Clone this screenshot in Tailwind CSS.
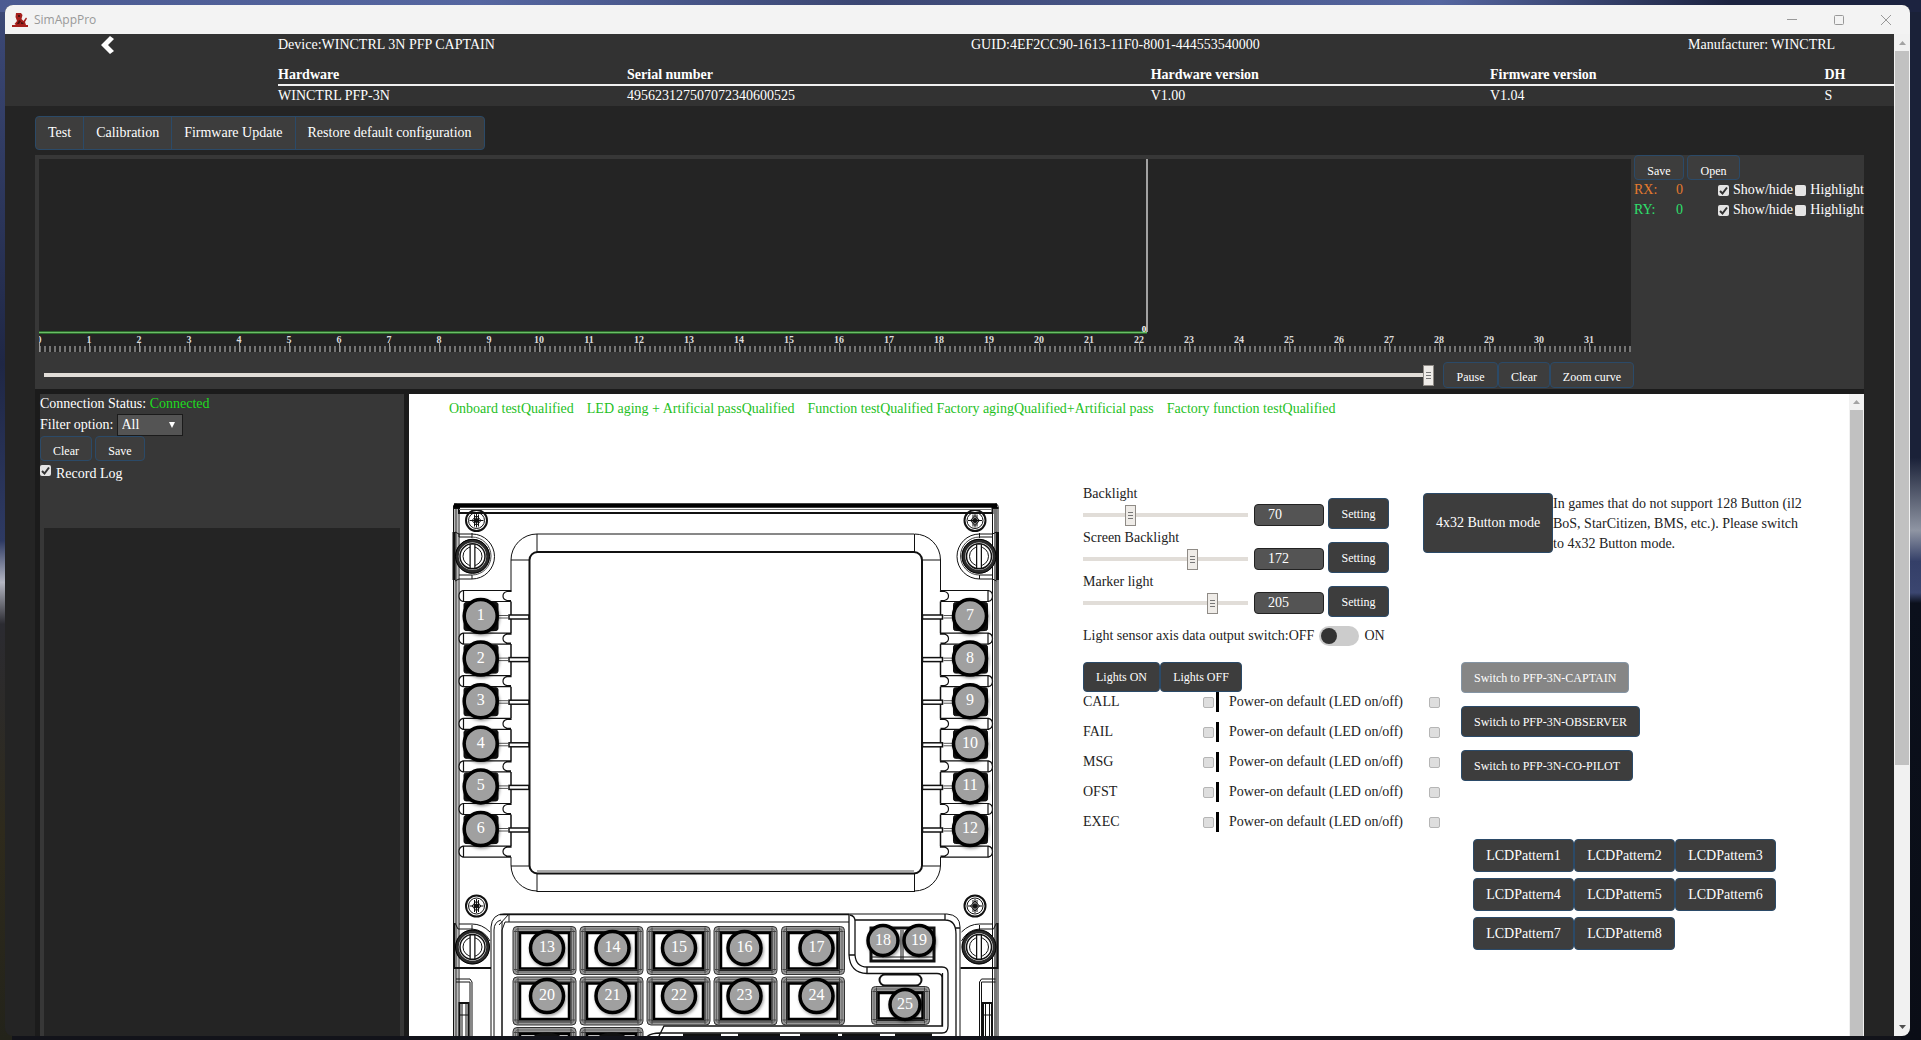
<!DOCTYPE html>
<html lang="en">
<head>
    <meta charset="UTF-8">
    <meta name="viewport" content="width=device-width, initial-scale=1.0">
    <title>SimAppPro</title>
    <script src="https://cdn.jsdelivr.net/npm/@tailwindcss/browser@4"></script>
    <style>
        /* desktop wallpaper round the window */
        body {
            background:
                linear-gradient(90deg, #4b5a91, #5566a0 25%, #3b4672 45%, #5566a0 75%, #1c2340 90%) top / 100% 12px no-repeat,
                linear-gradient(#3d4a78, #1f2745 35%, #2e3a63 52%, #b4b6c2 56%, #2b2b31 60%, #2e2a1c 80%, #23231a) left / 12px 100% no-repeat,
                linear-gradient(#1a2138, #1a2138 44%, #8f95a3 51%, #343f68 54%, #3b4670 57%, #0b101c 58%, #0a0d16) right / 20px 100% no-repeat,
                #12131a;
        }
        .range { appearance: none; background: transparent; height: 21px; }
        .range::-webkit-slider-runnable-track { height: 4px; background: #e1ddd8; }
        .range::-webkit-slider-thumb {
            appearance: none; width: 11px; height: 21px; margin-top: -8px;
            border: 1px solid #8f8b86;
            background: linear-gradient(#777, #777) center 6px / 5px 1px no-repeat,
                        linear-gradient(#777, #777) center 9px / 5px 1px no-repeat,
                        linear-gradient(#777, #777) center 12px / 5px 1px no-repeat, #efece8;
        }
    </style>
</head>
<body class="h-screen overflow-hidden pt-[5px] pr-[11px] pb-[4px] pl-[5px] font-['Liberation_Serif',serif] text-[14px] leading-5 text-white">
    <div class="flex h-full flex-col overflow-hidden rounded-lg bg-[#242424]">

        <!-- title bar -->
        <div class="flex h-[29px] shrink-0 items-center justify-between bg-[#f3f3f3] pr-[19px] pl-[7px]">
            <div class="flex items-center gap-[6px]">
                <svg class="size-4" viewBox="0 0 16 16" fill="#a5201d">
                    <path d="M4 1h5l1.500 2-1 4 2 2 2.500-3.500 1 1L13 10l1 3H4L2.500 12 5 9 3.500 5z"/>
                    <path d="M0 13h16v2H0z"/>
                    <path d="M6 3h2v2H6zM7 8l2 1-2 3H5zM9 10l3 1-1 1H9z" fill="#4d1212"/>
                </svg>
                <span class="font-['Open_Sans',sans-serif] text-xs text-[#999]">SimAppPro</span>
            </div>
            <div class="flex gap-[37px] text-[#999]">
                <button aria-label="Minimize"><svg class="size-[10px]" viewBox="0 0 10 10" stroke="currentColor"><path d="M0 4.500h10"/></svg></button>
                <button aria-label="Maximize"><svg class="size-[10px]" viewBox="0 0 10 10" fill="none" stroke="currentColor"><rect x=".5" y=".5" width="9" height="9" rx="1"/></svg></button>
                <button aria-label="Close"><svg class="size-[10px]" viewBox="0 0 10 10" stroke="currentColor"><path d="M0 0l10 10M10 0L0 10"/></svg></button>
            </div>
        </div>

        <div class="flex min-h-0 flex-1">
            <div class="flex min-w-0 flex-1 flex-col">

                <!-- device header -->
                <header class="flex h-[72px] shrink-0 bg-[#323232]">
                    <div class="w-[273px] shrink-0 pt-[2px] pl-24">
                        <button aria-label="Back" class="block"><svg class="h-[18px] w-[13px]" viewBox="0 0 13 18" fill="#fff"><path d="M9 0l4 3-6 6 6 6-4 3L0 9z"/></svg></button>
                    </div>
                    <div class="flex-1">
                        <div class="grid grid-cols-[693fr_717fr_206fr] pt-px">
                            <div>Device:WINCTRL 3N PFP CAPTAIN</div>
                            <div>GUID:4EF2CC90-1613-11F0-8001-444553540000</div>
                            <div>Manufacturer: WINCTRL</div>
                        </div>
                        <table class="mt-[9px] w-full table-fixed text-left">
                            <colgroup><col class="w-[21.6%]"><col class="w-[32.4%]"><col class="w-[21%]"><col class="w-[20.7%]"><col></colgroup>
                            <thead>
                                <tr class="h-[21px] border-b-2 border-[#f0f0f0] leading-[19px]">
                                    <th>Hardware</th><th>Serial number</th><th>Hardware version</th><th>Firmware version</th><th>DH</th>
                                </tr>
                            </thead>
                            <tbody>
                                <tr class="leading-5">
                                    <td>WINCTRL PFP-3N</td><td>495623127507072340600525</td><td>V1.00</td><td>V1.04</td><td>S</td>
                                </tr>
                            </tbody>
                        </table>
                    </div>
                </header>

                <main class="flex min-h-0 flex-1 flex-col pt-[10px] pr-[30px] pl-[30px]">
                    <nav class="mb-[5px] flex h-[34px] shrink-0 self-start divide-x divide-[#2b4a68] rounded border border-[#2b4a68] bg-[#3d3d3d]">
                        <button class="px-3">Test</button>
                        <button class="px-3">Calibration</button>
                        <button class="px-3">Firmware Update</button>
                        <button class="px-3">Restore default configuration</button>
                    </nav>

                    <!-- axis curve -->
                    <section class="flex h-[234px] shrink-0 bg-[#373737]">
                        <div class="flex min-w-0 flex-1 flex-col pt-1 pl-1">
                            <svg id="chart" class="mr-[3px] h-[193px] w-auto bg-[#242424]">
                                <defs>
                                    <pattern id="minor" width="5" height="6" patternUnits="userSpaceOnUse"><rect width="2" height="6" fill="#747474"/></pattern>
                                </defs>
                                <rect y="187" width="100%" height="6" fill="url(#minor)"/>
                                <path d="M0 173.500H1108" stroke="#2d6b2c" stroke-width="3"/>
                                <path d="M0 173.500H1108" stroke="#6bbd68"/>
                                <path d="M1108 0V173" stroke="#ccc" stroke-width="1.500"/>
                            </svg>
                            <div class="flex h-[37px] items-center pt-2 pl-[5px]">
                                <input type="range" aria-label="Timeline" value="100" class="range min-w-0 flex-1">
                                <div class="ml-[9px] flex text-xs">
                                    <button class="h-[26px] w-[55px] rounded border border-[#2b4a68] bg-[#3d3d3d] pt-1">Pause</button>
                                    <button class="h-[26px] w-[52px] rounded border border-[#2b4a68] bg-[#3d3d3d] pt-1">Clear</button>
                                    <button class="h-[26px] w-[84px] rounded border border-[#2b4a68] bg-[#3d3d3d] pt-1">Zoom curve</button>
                                </div>
                            </div>
                        </div>
                        <div class="w-[230px] shrink-0">
                            <div class="flex gap-[3px] text-xs">
                                <button class="h-[25px] w-[50px] rounded border border-[#2b4a68] bg-[#3d3d3d] pt-[6px]">Save</button>
                                <button class="h-[25px] w-[53px] rounded border border-[#2b4a68] bg-[#3d3d3d] pt-[6px]">Open</button>
                            </div>
                            <div class="flex items-center">
                                <span class="w-[42px] text-[#e67a2e]">RX:</span><span class="w-[42px] text-[#e67a2e]">0</span>
                                <label class="flex items-center gap-1"><input type="checkbox" checked class="tick size-[11px] appearance-none rounded-xs bg-[#e4e4e4]">Show/hide</label>
                                <label class="ml-auto flex items-center gap-1"><input type="checkbox" class="tick size-[11px] appearance-none rounded-xs bg-[#e4e4e4]">Highlight</label>
                            </div>
                            <div class="flex items-center">
                                <span class="w-[42px] text-[#2ee06c]">RY:</span><span class="w-[42px] text-[#2ee06c]">0</span>
                                <label class="flex items-center gap-1"><input type="checkbox" checked class="tick size-[11px] appearance-none rounded-xs bg-[#e4e4e4]">Show/hide</label>
                                <label class="ml-auto flex items-center gap-1"><input type="checkbox" class="tick size-[11px] appearance-none rounded-xs bg-[#e4e4e4]">Highlight</label>
                            </div>
                        </div>
                    </section>

                    <section class="flex min-h-0 flex-1 gap-[5px] bg-[#1b1b1b] pt-[5px] pl-[5px]">
                        <!-- log -->
                        <div class="flex w-[364px] shrink-0 flex-col bg-[#373737]">
                            <div>Connection Status: <span class="text-[#1fdc1f]">Connected</span></div>
                            <div class="flex items-center">
                                <label for="filter" class="mr-[3px]">Filter option:</label>
                                <span class="relative flex">
                                    <select id="filter" class="h-[22px] w-[66px] appearance-none border border-[#1b1b1b] bg-[#545454] pl-1"><option>All</option></select>
                                    <svg class="pointer-events-none absolute top-2 right-2 size-[6px]" viewBox="0 0 6 6" fill="#fff"><path d="M0 0h6L3 6z"/></svg>
                                </span>
                            </div>
                            <div class="flex gap-[3px] text-xs">
                                <button class="h-[25px] w-[52px] rounded border border-[#2b4a68] bg-[#3d3d3d] pt-1">Clear</button>
                                <button class="h-[25px] w-[50px] rounded border border-[#2b4a68] bg-[#3d3d3d] pt-1">Save</button>
                            </div>
                            <label class="mt-[3px] flex items-start gap-[5px]"><input type="checkbox" checked class="tick mt-px size-[11px] appearance-none rounded-xs bg-[#e4e4e4]">Record Log</label>
                            <div class="mx-1 mt-11 flex-1 bg-[#242424]"></div>
                        </div>

                        <!-- device test panel -->
                        <div class="flex min-w-0 flex-1 bg-white text-[#222]">
                            <div class="min-w-0 flex-1 overflow-hidden pl-10">
                                <div class="flex gap-[13px] pt-[5px] text-[#1fbf1f]">
                                    <span>Onboard testQualified</span>
                                    <span>LED aging + Artificial passQualified</span>
                                    <span>Function testQualified Factory agingQualified+Artificial pass</span>
                                    <span>Factory function testQualified</span>
                                </div>
                                <div class="flex items-start gap-20 pt-[66px]">
                                    <svg id="device" class="h-[552px] w-[554px] shrink-0" viewBox="449 485 554 552" fill="none" stroke="#111"></svg>

                                    <div class="shrink-0">
                                        <div class="flex items-start">
                                            <div class="w-[306px]">
                                                <div class="flex h-[44px] items-end">
                                                    <div class="mb-1 w-[165px]"><label for="back" class="block">Backlight</label><input id="back" type="range" max="255" value="70" class="range block w-full"></div>
                                                    <input type="text" aria-label="Backlight value" value="70" class="mb-[3px] ml-[6px] h-[22px] w-[70px] rounded border border-[#222] bg-[#545454] pl-[13px] text-white">
                                                    <button class="ml-1 h-[31px] w-[61px] rounded border border-[#2b4a68] bg-[#3d3d3d] text-xs text-white">Setting</button>
                                                </div>
                                                <div class="flex h-[44px] items-end">
                                                    <div class="mb-1 w-[165px]"><label for="screen" class="block">Screen Backlight</label><input id="screen" type="range" max="255" value="172" class="range block w-full"></div>
                                                    <input type="text" aria-label="Screen backlight value" value="172" class="mb-[3px] ml-[6px] h-[22px] w-[70px] rounded border border-[#222] bg-[#545454] pl-[13px] text-white">
                                                    <button class="ml-1 h-[31px] w-[61px] rounded border border-[#2b4a68] bg-[#3d3d3d] text-xs text-white">Setting</button>
                                                </div>
                                                <div class="flex h-[44px] items-end">
                                                    <div class="mb-1 w-[165px]"><label for="marker" class="block">Marker light</label><input id="marker" type="range" max="255" value="205" class="range block w-full"></div>
                                                    <input type="text" aria-label="Marker light value" value="205" class="mb-[3px] ml-[6px] h-[22px] w-[70px] rounded border border-[#222] bg-[#545454] pl-[13px] text-white">
                                                    <button class="ml-1 h-[31px] w-[61px] rounded border border-[#2b4a68] bg-[#3d3d3d] text-xs text-white">Setting</button>
                                                </div>
                                                <div class="mt-[9px] flex items-center">
                                                    <label for="sensor">Light sensor axis data output switch:OFF</label>
                                                    <input id="sensor" type="checkbox" role="switch" class="mx-[5px] h-5 w-10 appearance-none rounded-full bg-[#ccc] p-[2px] before:block before:size-4 before:rounded-full before:bg-[#333]">
                                                    <span>ON</span>
                                                </div>
                                            </div>
                                            <button class="mt-2 ml-[34px] h-[60px] w-[130px] shrink-0 rounded border border-[#2b4a68] bg-[#3d3d3d] text-white">4x32 Button mode</button>
                                            <p class="mt-[9px] w-[250px]">In games that do not support 128 Button (il2 BoS, StarCitizen, BMS, etc.). Please switch to 4x32 Button mode.</p>
                                        </div>

                                        <div class="mt-4 flex items-start">
                                            <div class="w-[357px]">
                                                <div class="flex text-xs text-white">
                                                    <button class="h-[30px] w-[77px] rounded border border-[#2b4a68] bg-[#3d3d3d]">Lights ON</button>
                                                    <button class="h-[30px] w-[82px] rounded border border-[#2b4a68] bg-[#3d3d3d]">Lights OFF</button>
                                                </div>
                                                <div id="leds" class="flex flex-col gap-[10px]"></div>
                                            </div>
                                            <div class="ml-[21px]">
                                                <div class="flex flex-col items-start gap-[13px] text-xs text-white">
                                                    <button disabled class="h-[31px] rounded border border-[#8494a4] bg-[#868686] px-3">Switch to PFP-3N-CAPTAIN</button>
                                                    <button class="h-[31px] rounded border border-[#2b4a68] bg-[#3d3d3d] px-3">Switch to PFP-3N-OBSERVER</button>
                                                    <button class="h-[31px] rounded border border-[#2b4a68] bg-[#3d3d3d] px-3">Switch to PFP-3N-CO-PILOT</button>
                                                </div>
                                                <div id="patterns" class="mt-[58px] ml-3 grid w-[303px] grid-cols-3 gap-y-[6px] text-white"></div>
                                            </div>
                                        </div>
                                    </div>
                                </div>
                            </div>
                            <div class="flex w-[15px] shrink-0 flex-col bg-[#f1f1f1]">
                                <svg class="mx-auto my-[5px] h-[6px] w-[7px] shrink-0" viewBox="0 0 7 6" fill="#a3a3a3"><path d="M0 5h7L3.500 1z"/></svg>
                                <div class="mx-px flex-1 bg-[#c1c1c1]"></div>
                            </div>
                        </div>
                    </section>
                </main>
            </div>

            <!-- page scrollbar -->
            <div class="flex w-4 shrink-0 flex-col items-center bg-[#f1f1f1]">
                <svg class="my-[5px] h-[7px] w-[7px] shrink-0" viewBox="0 0 7 7" fill="#a3a3a3"><path d="M0 6h7L3.500 2z"/></svg>
                <div class="w-[14px] flex-[714] bg-[#c1c1c1]"></div>
                <div class="flex-[254]"></div>
                <svg class="my-[5px] h-[7px] w-[7px] shrink-0" viewBox="0 0 7 7" fill="#505050"><path d="M0 1h7L3.500 5z"/></svg>
            </div>
        </div>
    </div>

    <script>
        // tick marks inside the checked boxes
        document.querySelectorAll('.tick:checked').forEach(box => {
            const wrap = document.createElement('span');
            wrap.className = 'relative flex';
            box.replaceWith(wrap);
            wrap.append(box);
            wrap.insertAdjacentHTML('beforeend', '<svg class="pointer-events-none absolute bottom-0 left-0 size-[11px]" viewBox="0 0 11 11" fill="none" stroke="#333" stroke-width="2"><path d="M2 6l2.500 2.500L9 2.500"/></svg>');
        });

        // time ruler, one unit every 50px
        let ruler = '';
        for (let i = 0; i <= 31; i++) {
            ruler += `<path d="M${i * 50 + .5} 184v9" stroke="#999"/>
                <text x="${i * 50}" y="184" text-anchor="middle" font-size="10" font-weight="bold" fill="#ddd">${i}</text>`;
        }
        ruler += '<text x="1105" y="173" text-anchor="middle" font-size="9" font-weight="bold" fill="#fff">0</text>';
        document.getElementById('chart').insertAdjacentHTML('beforeend', ruler);

        document.getElementById('leds').innerHTML = ['CALL', 'FAIL', 'MSG', 'OFST', 'EXEC'].map(name => `
            <div class="flex h-5 items-center">
                <label for="led-${name}" class="w-[120px]">${name}</label>
                <input id="led-${name}" type="checkbox" class="size-[11px] appearance-none rounded-xs border border-[#b5b5b5] bg-[#dedede]">
                <span class="ml-[2px] h-5 w-[3px] bg-black"></span>
                <label for="on-${name}" class="ml-[10px] w-[200px]">Power-on default (LED on/off)</label>
                <input id="on-${name}" type="checkbox" class="size-[11px] appearance-none rounded-xs border border-[#b5b5b5] bg-[#dedede]">
            </div>`).join('');

        document.getElementById('patterns').innerHTML = [1, 2, 3, 4, 5, 6, 7, 8].map(n =>
            `<button class="h-[33px] rounded border border-[#2b4a68] bg-[#3d3d3d]">LCDPattern${n}</button>`).join('');

        // half of the panel outline, mirrored for the right side
        const side = () => {
            let s = `
                <path d="M453.500 1040V506q0-2 3-2M459 1040V508"/><path d="M456 1040V509" stroke="#777" stroke-width="3"/>
                <path d="M453 508h6v6" stroke-width="2"/>
                <path d="M454 532v48" stroke-width="3"/>
                <path d="M455 532l4 2v3h13M459 534h13a22.500 22.500 0 0 1 0 45h-13l-4 2M459 575h13v4M472 533v5"/>
                <path d="M472 537a19 19 0 0 1 0 38" stroke="#444"/>
                <path d="M511 591v-31a26 26 0 0 1 26-26M511 560h18M537 534v18"/>
                <path d="M511 857v8a26 26 0 0 0 26 26M511 866h18M537 874v18"/>
                <path d="M455 923l3 6h14a22 22 0 0 1 18 12M472 925v6M459 924h13q10 0 18 8"/>
                <path d="M454 923v45h37" stroke-width="2"/>
                <path d="M456 979h14l2 3v58M456 982h14v58M459 1015h10M462 1003v37M466 1003v37"/>
                <path d="M459.500 1040v-37h9v37" stroke-width="2"/>`;
            for (let i = 0; i < 7; i++) {
                const y = 590.5 + i * 42.6;
                s += `<path d="M511 ${y}h-48q-4 1-4 5.500t4 5.500h48M463.500 ${y}v11M511 ${y}v1h-4q-4 1-4 4.500t4 4.500h4" stroke-width="1.200" fill="#fff"/>`;
                if (i < 6) s += `<path d="M511 ${y + 11}v31.600" stroke-width="1.500"/>
                    <rect x="464" y="${y + 12}" width="34" height="28" rx="2" fill="#111"/>
                    <path d="M498 ${y + 25}h10M498 ${y + 27.5}h10" stroke="#555"/>
                    <rect x="509" y="${y + 24.5}" width="20" height="4" stroke-width="1.500" fill="#fff"/>`;
            }
            for (const y of [520.5, 906]) {
                s += `<circle cx="476.500" cy="${y}" r="10.500" stroke-width="2"/><circle cx="476.500" cy="${y}" r="8"/>
                    <path d="M476.500 ${y - 7}v14M469.500 ${y}h14M472 ${y}l4.500-5 4.500 5-4.500 5zM474.500 ${y - 6}v12M478.500 ${y - 6}v12"/><circle cx="476.500" cy="${y}" r="2" fill="#111"/>`;
            }
            for (const y of [556.3, 947]) {
                s += `<circle cx="472.500" cy="${y}" r="15.500" stroke-width="3.500" stroke="#2a2a2a" fill="#fff"/><circle cx="472.500" cy="${y}" r="12.500" stroke-width="1.500"/>
                    <circle cx="472.500" cy="${y}" r="9.500"/><circle cx="472.500" cy="${y}" r="17" stroke="#000"/>
                    <path d="M472.500 ${y - 12}v24" stroke-width="6"/><path d="M472.500 ${y - 11.5}v23" stroke="#fff" stroke-width="3.500"/>`;
            }
            return s;
        };

        const key = (x, y, w = 63, h = 48) => `
            <rect x="${x}" y="${y}" width="${w}" height="${h}" rx="4" fill="#999" stroke="#333"/>
            <rect x="${x + 2.5}" y="${y + 2.5}" width="${w - 5}" height="${h - 5}" rx="2" stroke="#666"/>
            <rect x="${x + 5}" y="${y + 5}" width="${w - 10}" height="${h - 9}" stroke="#222"/>
            <path d="M${x + 1} ${y + 5}h4v-4M${x + w - 1} ${y + 5}h-4v-4M${x + 1} ${y + h - 5}h4v4M${x + w - 1} ${y + h - 5}h-4v4" stroke="#444"/>
            <rect x="${x + 7}" y="${y + 6.5}" width="${w - 14}" height="${h - 12.5}" stroke-width="2.500" stroke="#000" fill="#fff"/>`;

        const dot = (n, x, y, r = 16.5) => `
            <circle cx="${x}" cy="${y}" r="${r}" fill="#a0a0a0" stroke="#000" stroke-width="3.500" filter="url(#soft)"/>
            <text x="${x}" y="${y + 4}" text-anchor="middle" font-size="16" fill="#fff" stroke="none">${n}</text>`;

        const keyX = [513, 580, 647, 714, 781.5];
        const dotX = [547, 612.5, 679, 744.5, 816.5];
        const half = side();
        let svg = `
            <defs><filter id="soft" x="-30%" y="-30%" width="160%" height="160%"><feDropShadow dx="1" dy="1.500" stdDeviation="1.500" flood-opacity=".4"/></filter></defs>
            <g>${half}</g><g transform="translate(1451.500 0) scale(-1 1)">${half}</g>
            <path d="M454 505.500h543" stroke-width="4.500" stroke="#000"/><path d="M459 509.500h533" stroke="#777"/><path d="M459 513h533" stroke-width="2"/>
            <path d="M537 534h377M537 891.500h377"/>
            <rect x="529.500" y="552" width="392.500" height="321.500" rx="8" stroke-width="2" fill="#fff"/>
            <path d="M537 871h377" stroke="#555"/>
            <path d="M491 1040V927q1-13 13-13h443q13 1 13 13v113M494 1040V930q0-8 7-10M502 1040V930l3-8h344M499 925l10-11v8M502 1040V921"/>
            <path d="M500 914.500h349" stroke-width="1.500"/>
            <path d="M849 914v41q1 18 18 18.500h70q5 0 5 4v48M855 921v34q1 12 12 12h75q6 0 6 6v53q0 7-6 7H660q-12 0-16 7M942.500 973v53H664l-6 12M855 920h90q11 0 11 14v106M849 955h6M867 967v6M850 915q5 1 5 6M945 914v6M955 928h5" stroke-width="1.300"/>`;
        for (let row = 0; row < 3; row++) {
            keyX.forEach((x, i) => { if (row < 2 || i < 2) svg += key(x, 926.5 + row * 50.5); });
        }
        svg += `<path d="M738 1035h42M800 1035h38M842 1035h38M895 1035h37M683 1035h38" stroke-width="3"/>
            <path d="M535 1037q12-5 24 0M600 1037q12-5 24 0" stroke-width="4"/>
            <rect x="871" y="928" width="63" height="33" stroke-width="3" fill="#fff"/><path d="M901 930v30M903 930v30M872 957h62"/>
            <rect x="879.500" y="974.500" width="42" height="11" rx="5.500" stroke-width="2" fill="#fff"/>` + key(871.5, 986.5, 58, 38);
        for (let i = 0; i < 6; i++) {
            const y = 616 + i * 42.6;
            svg += dot(i + 1, 480.7, y) + dot(i + 7, 970, y);
        }
        dotX.forEach((x, i) => { svg += dot(i + 13, x, 948) + dot(i + 20, x, 996); });
        svg += dot(18, 883, 940.5, 15) + dot(19, 919, 940.5, 15) + dot(25, 905, 1004.5, 15);
        document.getElementById('device').innerHTML = svg;
    </script>
</body>
</html>
